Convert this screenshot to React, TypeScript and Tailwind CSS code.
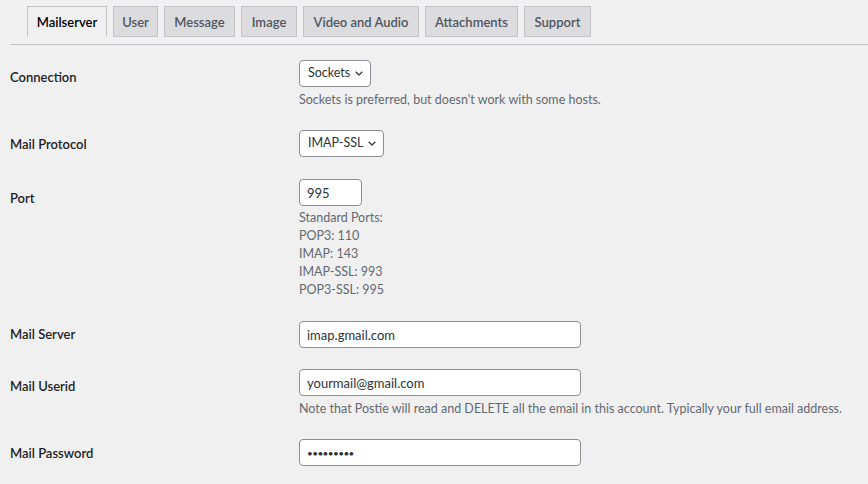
import React from 'react'

const tabs = [
  { label: 'Mailserver', w: 'w-[80px]', active: true },
  { label: 'User', w: 'w-[45px]' },
  { label: 'Message', w: 'w-[71px]' },
  { label: 'Image', w: 'w-[56px]' },
  { label: 'Video and Audio', w: 'w-[116px]' },
  { label: 'Attachments', w: 'w-[93px]' },
  { label: 'Support', w: 'w-[67px]' },
]

const Chevron = () => (
  <svg width="8" height="5" viewBox="0 0 8 5" className="shrink-0">
    <path d="M0.7 0.7L4 4 7.3 0.7" fill="none" stroke="#3c434a" strokeWidth="1.4" />
  </svg>
)

const Select = ({ value, w }: { value: string; w: string }) => (
  <div
    className={`${w} h-[27px] flex items-center justify-between pl-[8px] pr-[7px] bg-white border border-[#8c8f94] rounded-[4px] text-[12.5px] text-[#2c3338]`}
  >
    <span>{value}</span>
    <Chevron />
  </div>
)

const Input = ({ value, w, dots }: { value: string; w: string; dots?: boolean }) => (
  <input
    readOnly
    value={value}
    className={`${w} h-[27px] block px-[7px] bg-white border border-[#8c8f94] rounded-[4px] text-[#2c3338] outline-none ${
      dots ? 'text-[10px] tracking-[-0.6px]' : 'text-[13px]'
    }`}
  />
)

const Desc = ({ children, mt = 'mt-[4px]' }: { children: React.ReactNode; mt?: string }) => (
  <p className={`${mt} text-[12.5px] leading-[18px] text-[#646970]`}>{children}</p>
)

const Row = ({
  label,
  labelPt,
  pb,
  children,
}: {
  label: string
  labelPt: string
  pb: string
  children: React.ReactNode
}) => (
  <div className={`flex pl-[10px] ${pb}`}>
    <div className={`w-[289px] shrink-0 ${labelPt} text-[13px] leading-[20px] font-semibold text-[#1d2327]`}>
      {label}
    </div>
    <div className="pt-[15px]">{children}</div>
  </div>
)

export default function App() {
  return (
    <div className="min-h-screen bg-[#f0f0f1] font-[Lato,sans-serif]">
      <div className="flex gap-[6px] pl-[27px] pt-[6px]">
        {tabs.map((t) => (
          <div
            key={t.label}
            className={`${t.w} h-[31px] pt-[2px] flex items-center justify-center border text-[13px] font-semibold ${
              t.active
                ? 'border-[#c3c4c7] border-b-transparent bg-[#f0f0f1] text-black'
                : 'border-[#c3c4c7] bg-[#dcdcde] text-[#50575e]'
            }`}
          >
            {t.label}
          </div>
        ))}
      </div>
      <div className="mt-[7px] ml-[10px] h-px bg-[#c3c4c7]" />

      <Row label="Connection" labelPt="pt-[22px]" pb="pb-[6px]">
        <Select value="Sockets" w="w-[72px]" />
        <Desc>Sockets is preferred, but doesn't work with some hosts.</Desc>
      </Row>

      <Row label="Mail Protocol" labelPt="pt-[19px]" pb="pb-[7px]">
        <Select value="IMAP-SSL" w="w-[85px]" />
      </Row>

      <Row label="Port" labelPt="pt-[24px]" pb="pb-[7px]">
        <Input value="995" w="w-[63px]" />
        <Desc mt="mt-[3px]">
          Standard Ports:
          <br />
          POP3: 110
          <br />
          IMAP: 143
          <br />
          IMAP-SSL: 993
          <br />
          POP3-SSL: 995
        </Desc>
      </Row>

      <Row label="Mail Server" labelPt="pt-[18px]" pb="pb-[6px]">
        <Input value="imap.gmail.com" w="w-[282px]" />
      </Row>

      <Row label="Mail Userid" labelPt="pt-[22px]" pb="pb-[6px]">
        <Input value="yourmail@gmail.com" w="w-[282px]" />
        <Desc>
          Note that Postie will read and DELETE all the email in this account. Typically your full email address.
        </Desc>
      </Row>

      <Row label="Mail Password" labelPt="pt-[19px]" pb="pb-[18px]">
        <Input value="•••••••••" w="w-[282px]" dots />
      </Row>
    </div>
  )
}
